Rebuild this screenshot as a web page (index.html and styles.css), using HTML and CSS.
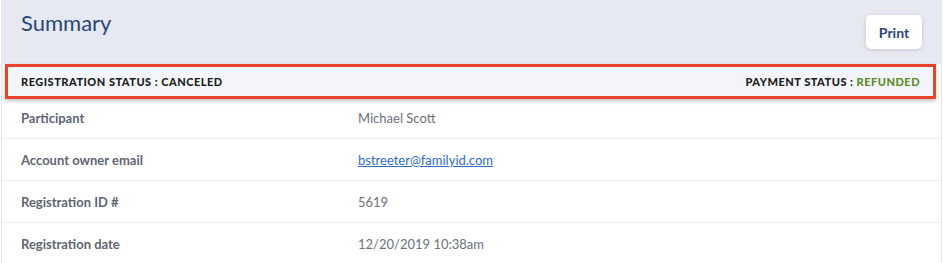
FILE: index.html
```html
<!DOCTYPE html>
<html lang="en">

<head>
  <meta charset="UTF-8">
  <meta name="viewport" content="width=device-width, initial-scale=1.0">
  <title>Summary</title>
  <link rel="stylesheet" href="styles.css">
</head>

<body>
  <div class="summary-card">
    <div class="summary-header">
      <h2>Summary</h2>
      <button class="print-button">Print</button>
    </div>

    <!-- Status bar -->
    <div class="status-bar">
      <span>Registration status : Canceled</span>
      <span>Payment status : <span class="status-green">Refunded</span></span>
    </div>

    <div class="detail-row">
      <div class="detail-label">Participant</div>
      <div class="detail-value">Michael Scott</div>
    </div>
    <div class="detail-row">
      <div class="detail-label">Account owner email</div>
      <div class="detail-value"><a href="#">bstreeter@familyid.com</a></div>
    </div>
    <div class="detail-row">
      <div class="detail-label">Registration ID #</div>
      <div class="detail-value">5619</div>
    </div>
    <div class="detail-row">
      <div class="detail-label">Registration date</div>
      <div class="detail-value">12/20/2019 10:38am</div>
    </div>
  </div>
</body>

</html>
```

FILE: styles.css
```css
body {
  margin: 0;
  padding: 0;
  background-color: #ffffff;
  font-family: Lato, "Open Sans", sans-serif;
}

.summary-card {
  margin: 0 1px;
  border-left: 1px solid #e6e6e6;
  border-right: 1px solid #e6e6e6;
  background-color: #ffffff;
}

.summary-header {
  height: 64px;
  display: flex;
  justify-content: space-between;
  align-items: flex-start;
  padding: 0 19px 0 19px;
  background-color: #e6e9f1;
}

h2 {
  margin: 9px 0 0 0;
  font-size: 22px;
  font-weight: 400;
  color: #2c4577;
}

.print-button {
  margin-top: 15px;
  width: 56px;
  height: 34px;
  background-color: #ffffff;
  color: #2c4577;
  border: none;
  border-radius: 5px;
  box-shadow: 0 1px 4px rgba(0, 0, 0, 0.15);
  font-family: inherit;
  font-size: 14px;
  font-weight: 700;
  cursor: pointer;
}

/* Status bar */
.status-bar {
  position: relative;
  z-index: 1;
  height: 29px;
  margin: 0 5px -2px 3px;
  padding: 0 13px;
  display: flex;
  justify-content: space-between;
  align-items: center;
  background-color: #f4f5f9;
  border: 3px solid #e8432d;
  box-shadow: 0 2px 4px rgba(0, 0, 0, 0.25);
  font-size: 11px;
  font-weight: 900;
  letter-spacing: 0.5px;
  text-transform: uppercase;
  color: #1b1d22;
}

.status-green {
  color: #5b8c2a;
}

.detail-row {
  display: grid;
  grid-template-columns: 337px 1fr;
  align-items: center;
  height: 41px;
  padding-left: 19px;
  border-bottom: 1px solid #ececec;
  font-size: 13px;
}

.detail-label {
  font-weight: 700;
  color: #5f6571;
}

.detail-value {
  color: #6d7179;
}

.detail-value a {
  color: #2f6cc4;
}
```
